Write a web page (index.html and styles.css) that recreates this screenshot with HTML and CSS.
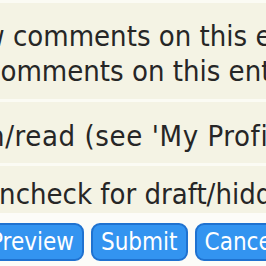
FILE: index.html
```html
<!DOCTYPE html>
<html>
<head>
<meta charset="utf-8">
<link rel="stylesheet" href="styles.css">
</head>
<body>
<div class="page">
  <div class="row row-top">
    <div class="line l1">Allow comments on this entry</div>
    <div class="line l2">Disable comments on this entry</div>
  </div>
  <div class="row row-mid">
    <div class="line l3">Hidden/read (see 'My Profile')</div>
  </div>
  <div class="row row-bot">
    <div class="line l4">Uncheck for draft/hidden</div>
  </div>
  <div class="buttons">
    <button class="btn">Preview</button>
    <button class="btn">Submit</button>
    <button class="btn">Cancel</button>
  </div>
</div>
</body>
</html>
```
FILE: styles.css
```css
html, body {
  margin: 0;
  padding: 0;
  background: #fcfcf8;
  overflow: hidden;
}
.page {
  width: 700px;
  font-family: "DejaVu Sans Condensed", "DejaVu Sans", sans-serif;
  font-stretch: semi-condensed;
  color: #262626;
}
.row {
  background: #f4f3e4;
  border-top: 3px solid #fbfbf4;
  font-size: 29px;
}
.row-top { padding: 16px 0 10px; }
.row-mid { padding: 17px 0 9px; }
.row-bot { padding: 11px 0 1px; }
.line { white-space: nowrap; line-height: 35px; }
.l1 { margin-left: -65px; }
.l2 { margin-left: -119px; }
.l3 { margin-left: -91px; letter-spacing: 0.6px; }
.l4 { margin-left: -20px; }
.buttons {
  display: flex;
  gap: 7px;
  margin-left: -20px;
  padding-top: 10px;
}
.btn {
  font-family: "DejaVu Sans Condensed", "DejaVu Sans", sans-serif;
  font-stretch: semi-condensed;
  font-size: 24px;
  color: #fff;
  background: #3394f0;
  border: 2px solid #1f72d0;
  border-radius: 9px;
  padding: 2px 8px;
  line-height: 30px;
}
```
